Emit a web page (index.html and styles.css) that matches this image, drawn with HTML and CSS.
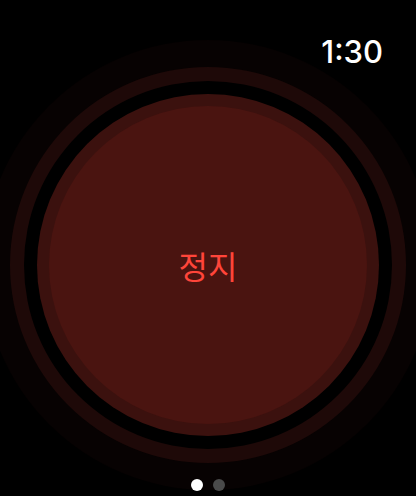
FILE: index.html
```html
<!DOCTYPE html>
<html lang="ko">
<head>
  <meta charset="UTF-8" />
  <meta name="viewport" content="width=device-width, initial-scale=1.0"/>
  <title>정지</title>
  <link rel="stylesheet" href="styles.css">
</head>
<body>
  <div class="screen">
    <div class="clock">1:30</div>

    <!-- 정지 버튼 (동심원) -->
    <div class="halo">
      <div class="ring-dark">
        <div class="gap">
          <div class="ring-main">
            <button class="stop-btn">정지</button>
          </div>
        </div>
      </div>
    </div>

    <div class="pager">
      <span class="dot active"></span>
      <span class="dot"></span>
    </div>
  </div>
</body>
</html>
```
FILE: styles.css
```css
body {
  margin: 0;
  background: #000;
  font-family: Inter, "Noto Sans CJK KR", sans-serif;
}
.screen {
  position: relative;
  width: 416px;
  height: 496px;
  overflow: hidden;
  display: flex;
  justify-content: center;
  align-items: flex-start;
  padding-top: 40px;
  box-sizing: border-box;
}
.clock {
  position: absolute;
  top: 33px;
  right: 33px;
  color: #fff;
  font-size: 31px;
  font-weight: 500;
  z-index: 2;
}
.halo,
.ring-dark,
.gap,
.ring-main {
  display: grid;
  place-items: center;
  border-radius: 50%;
  flex: none;
}
.halo {
  width: 450px;
  height: 450px;
  background: #070202;
}
.ring-dark {
  width: 396px;
  height: 396px;
  background: #1e0908;
}
.gap {
  width: 368px;
  height: 368px;
  background: #000;
}
.ring-main {
  width: 342px;
  height: 342px;
  background: #3b110e;
}
.stop-btn {
  width: 318px;
  height: 318px;
  border: none;
  border-radius: 50%;
  background: #4a1410;
  color: #ff453a;
  font-family: "Noto Sans CJK KR", sans-serif;
  font-size: 32px;
  padding: 0;
}
.pager {
  position: absolute;
  left: 0;
  right: 0;
  top: 479px;
  display: flex;
  justify-content: center;
  gap: 10px;
}
.dot {
  width: 12px;
  height: 12px;
  border-radius: 50%;
  background: #4a4a4a;
}
.dot.active {
  background: #fff;
}
```
